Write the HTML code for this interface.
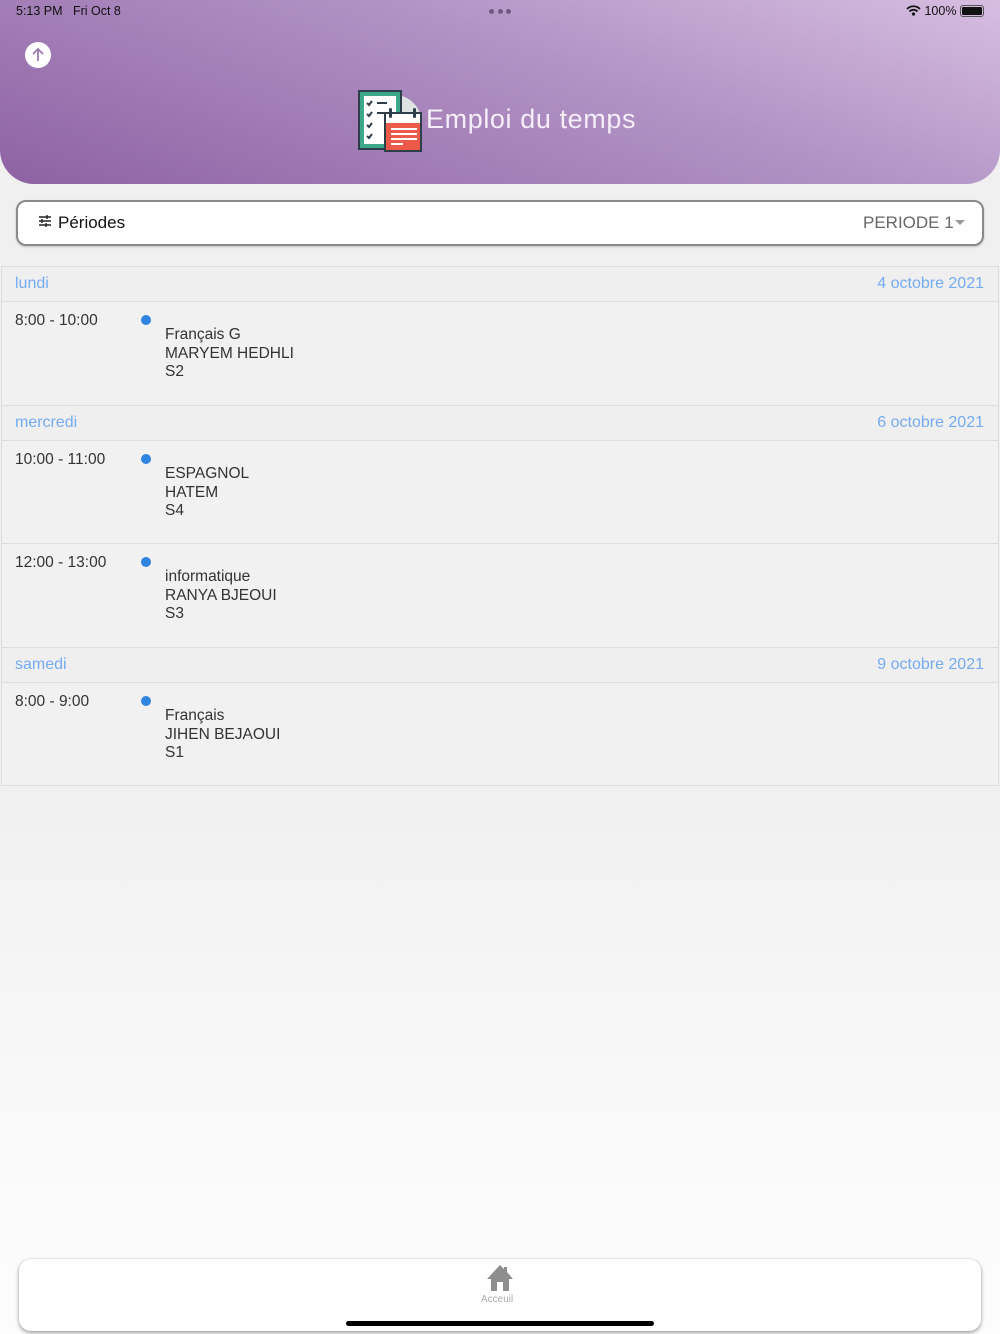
<!DOCTYPE html>
<html><head><meta charset="utf-8"><style>
*{margin:0;padding:0;box-sizing:border-box}
body{width:1000px;height:1334px;position:relative;overflow:hidden;font-family:"Liberation Sans",sans-serif;background:linear-gradient(#f0f0f0 0,#f0f0f0 780px,#fbfbfb 1200px,#fcfcfc 1334px)}
.hdr{position:absolute;left:0;top:0;width:1000px;height:184px;border-radius:0 0 34px 34px;background:linear-gradient(200deg,#d6bde0 0%,#b394c6 40%,#8e62a3 100%)}
.a{position:absolute;white-space:nowrap}
.list{position:absolute;left:1px;top:266px;width:998px;height:520px;border:1px solid #ddd;background:#f1f1f1}
.dh{position:absolute;left:0;width:996px;height:36px;border-top:1px solid #ddd;border-bottom:1px solid #ddd;background:#efefef;color:#74abf0;font-size:16px}
.dh span{position:absolute;top:8px}
.it{position:absolute;left:0;width:996px;height:103px;color:#333;font-size:15.5px}
.it .t{position:absolute;left:13px;top:10px}
.it .d{position:absolute;left:139px;top:13px;width:10px;height:10px;border-radius:50%;background:#2f84e0}
.it .x{position:absolute;left:163px;top:24px;line-height:18.5px}
.sep{border-bottom:1px solid #ddd}
</style></head><body>
<div class="hdr"></div>
<div class="a" style="left:16px;top:4px;font-size:12.5px;color:#111">5:13 PM&nbsp;&nbsp;&nbsp;Fri Oct 8</div>
<div class="a" style="left:489px;top:9px;width:22px;height:6px;display:flex;justify-content:space-between"><i style="width:5px;height:5px;border-radius:50%;background:#6e5a80"></i><i style="width:5px;height:5px;border-radius:50%;background:#6e5a80"></i><i style="width:5px;height:5px;border-radius:50%;background:#6e5a80"></i></div>
<div class="a" style="left:906px;top:4px;font-size:12.5px;color:#111">
<svg width="15" height="11" viewBox="0 0 15 11" style="vertical-align:-1px"><path d="M1 4a9 9 0 0 1 13 0M3.5 6.5a5.5 5.5 0 0 1 8 0" stroke="#111" stroke-width="1.8" fill="none"/><circle cx="7.5" cy="9" r="1.6" fill="#111"/></svg> 100%</div>
<div class="a" style="left:960px;top:5px;width:24px;height:12px;border:1px solid #555;border-radius:3px;padding:1px"><div style="width:100%;height:100%;background:#111;border-radius:1px"></div></div>
<div class="a" style="left:25px;top:42px;width:26px;height:26px;border-radius:50%;background:#fff">
<svg width="26" height="26" viewBox="0 0 26 26"><path d="M13 19V7M8 12l5-5 5 5" stroke="#9b7ab0" stroke-width="1.8" fill="none"/></svg></div>
<svg class="a" style="left:357px;top:89px" width="66" height="66" viewBox="0 0 66 66">
<path d="M40 6a28 28 0 0 1 22 40L40 46z" fill="#dfe3e2"/>
<rect x="2" y="2" width="42" height="58" fill="#3aa889" stroke="#2e3d4a" stroke-width="2"/>
<rect x="7" y="7" width="32" height="48" fill="#fff"/>
<g stroke="#2e3d4a" stroke-width="2" fill="none"><path d="M10 14l2 2 3-4M10 25l2 2 3-4M10 36l2 2 3-4M10 47l2 2 3-4M20 14h10M20 24h12"/></g>
<rect x="28" y="24" width="36" height="38" fill="#ee5a4a" stroke="#2e3d4a" stroke-width="2"/>
<rect x="29" y="25" width="34" height="9" fill="#fff"/>
<g fill="#2e3d4a"><rect x="32" y="19" width="3" height="10" rx="1.5"/><rect x="56" y="19" width="3" height="10" rx="1.5"/></g>
<g fill="#fff"><rect x="34" y="39" width="26" height="2"/><rect x="34" y="44" width="26" height="2"/><rect x="34" y="49" width="26" height="2"/><rect x="34" y="54" width="12" height="2"/></g>
</svg>
<div class="a" style="left:426px;top:104px;font-size:27px;color:#f5eef8;letter-spacing:.6px">Emploi du temps</div>
<div class="a" style="left:16px;top:200px;width:968px;height:46px;border:2px solid #8a8a8a;border-radius:10px;background:#fff;box-shadow:0 1px 2px rgba(0,0,0,.2)"></div>
<svg class="a" style="left:38px;top:214px" width="14" height="14" viewBox="0 0 14 14"><g stroke="#222" stroke-width="1.4"><path d="M1 3h12M1 7h12M1 11h12"/><path d="M9 1v4M4 5v4M8 9v4"/></g></svg>
<div class="a" style="left:58px;top:213px;font-size:17px;color:#111">Périodes</div>
<div class="a" style="left:863px;top:213px;font-size:17px;color:#666">PERIODE 1</div>
<div class="a" style="left:955px;top:220px;width:0;height:0;border-left:5px solid transparent;border-right:5px solid transparent;border-top:5px solid #999"></div>
<div class="list">
<div class="dh" style="top:-1px"><span style="left:13px">lundi</span><span style="right:14px">4 octobre 2021</span></div>
<div class="it" style="top:35px"><div class="t">8:00 - 10:00</div><div class="d"></div><div class="x">Français G<br>MARYEM HEDHLI<br>S2</div></div>
<div class="dh" style="top:138px"><span style="left:13px">mercredi</span><span style="right:14px">6 octobre 2021</span></div>
<div class="it sep" style="top:174px"><div class="t">10:00 - 11:00</div><div class="d"></div><div class="x">ESPAGNOL<br>HATEM<br>S4</div></div>
<div class="it" style="top:277px"><div class="t">12:00 - 13:00</div><div class="d"></div><div class="x">informatique<br>RANYA BJEOUI<br>S3</div></div>
<div class="dh" style="top:380px"><span style="left:13px">samedi</span><span style="right:14px">9 octobre 2021</span></div>
<div class="it" style="top:416px"><div class="t">8:00 - 9:00</div><div class="d"></div><div class="x">Français<br>JIHEN BEJAOUI<br>S1</div></div>
</div>
<div class="a" style="left:19px;top:1259px;width:962px;height:72px;background:#fff;border-radius:12px;box-shadow:0 2px 4px rgba(0,0,0,.35),0 0 2px rgba(0,0,0,.15)"></div>
<svg class="a" style="left:485px;top:1263px" width="30" height="30" viewBox="0 0 30 30"><path d="M15 2L2 16h4v12h6v-9h6v9h6V16h4L22 9V4h-3v2z" fill="#8e8e8e"/></svg>
<div class="a" style="left:481px;top:1294px;font-size:10px;color:#aaa">Acceuil</div>
<div class="a" style="left:346px;top:1321px;width:308px;height:5px;border-radius:3px;background:#000"></div>
</body></html>
